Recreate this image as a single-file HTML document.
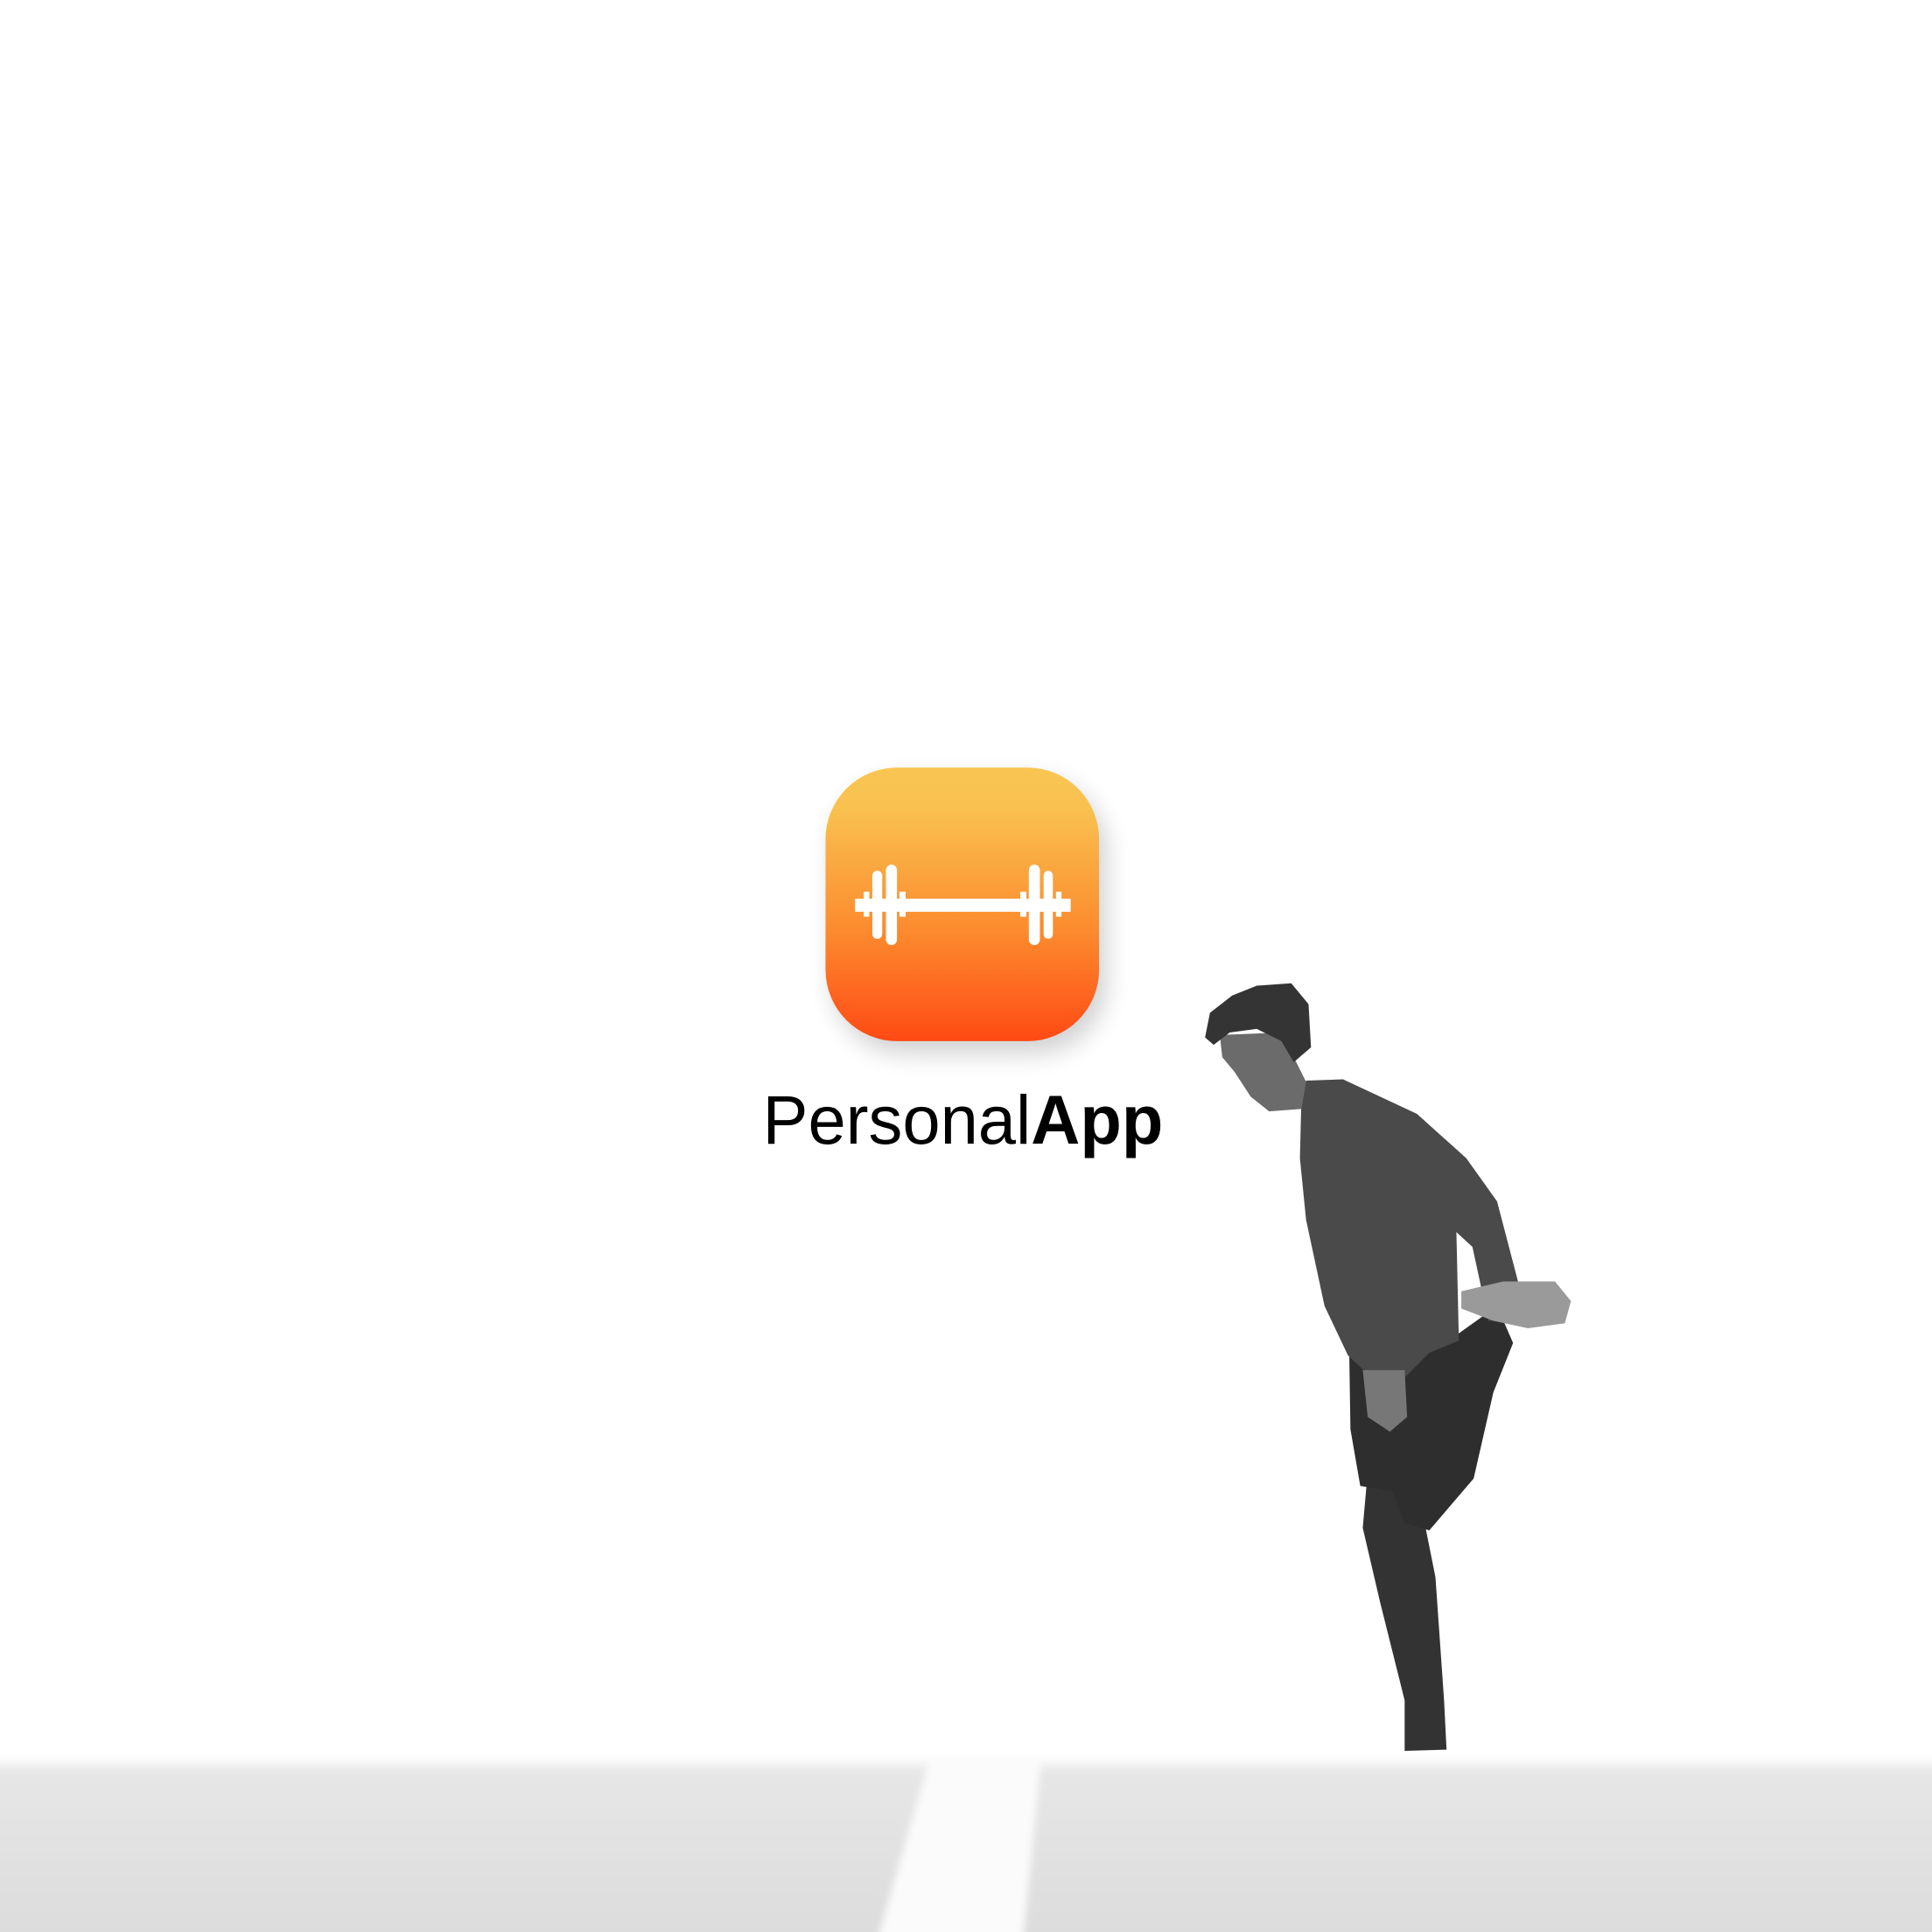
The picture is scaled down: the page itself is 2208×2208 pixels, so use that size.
<!DOCTYPE html>
<html><head><meta charset="utf-8"><style>
html,body{margin:0;padding:0;background:#fff;}
svg{display:block;}
</style></head><body>
<svg width="2208" height="2208" viewBox="0 0 1568 1568" xmlns="http://www.w3.org/2000/svg">
<defs>
<linearGradient id="ig" x1="0" y1="0" x2="0" y2="1">
<stop offset="0" stop-color="#f9c553"/><stop offset="0.15" stop-color="#f9c150"/>
<stop offset="0.6" stop-color="#fc8a2e"/><stop offset="1" stop-color="#ff4a14"/>
</linearGradient>
<linearGradient id="gr" x1="0" y1="0" x2="0" y2="1">
<stop offset="0" stop-color="#fff"/><stop offset="0.08" stop-color="#e6e6e6"/><stop offset="1" stop-color="#dcdcdc"/>
</linearGradient>
<filter id="sh" x="-30%" y="-30%" width="160%" height="160%"><feGaussianBlur stdDeviation="10"/></filter>
<filter id="bl"><feGaussianBlur stdDeviation="3"/></filter>
</defs>
<rect width="1568" height="1568" fill="#fff"/>
<g filter="url(#bl)">
<rect x="-10" y="1426" width="1590" height="150" fill="url(#gr)"/>
<polygon points="755,1426 845,1426 830,1575 712,1575" fill="#fbfbfb"/>
</g>
<rect x="676" y="633" width="222" height="222" rx="58" fill="#000" opacity="0.18" filter="url(#sh)"/>
<rect x="670" y="623" width="222" height="222" rx="58" fill="url(#ig)"/>
<g fill="#fff">
<rect x="694" y="729.4" width="175" height="10.6"/>
<rect x="701" y="723.7" width="4.5" height="20.3"/>
<rect x="708" y="706.7" width="8" height="55.3" rx="4"/>
<rect x="719" y="701.7" width="9" height="65.3" rx="4.5"/>
<rect x="730" y="723.7" width="5" height="20.3"/>
<rect x="828" y="723.7" width="5" height="20.3"/>
<rect x="835" y="701.7" width="9" height="65.3" rx="4.5"/>
<rect x="847" y="706.7" width="7.5" height="55.3" rx="3.75"/>
<rect x="857" y="723.7" width="4.5" height="20.3"/>
</g>
<text x="619" y="928" font-family="Liberation Sans, sans-serif" font-size="56" fill="#000" textLength="325" lengthAdjust="spacingAndGlyphs">Personal<tspan font-weight="bold">App</tspan></text>
<g>
<path d="M1110,1195 L1150,1205 L1165,1280 L1172,1380 L1174,1420 L1140,1421 L1140,1380 L1120,1300 L1106,1240 Z" fill="#333"/>
<path d="M1095,1095 L1180,1085 L1215,1060 L1228,1090 L1212,1130 L1196,1200 L1160,1242 L1140,1236 L1130,1210 L1104,1206 L1096,1160 Z" fill="#2e2e2e"/>
<path d="M1056,900 L1060,877 L1090,876 L1150,904 L1190,940 L1215,975 L1232,1040 L1226,1072 L1208,1072 L1195,1012 L1182,1000 L1184,1088 L1160,1098 L1140,1118 L1110,1115 L1094,1100 L1075,1060 L1060,990 L1055,940 Z" fill="#4a4a4a"/>
<path d="M1106,1112 L1140,1112 L1142,1150 L1128,1162 L1110,1150 Z" fill="#777"/>
<path d="M990,840 L1040,838 L1060,878 L1056,900 L1030,902 L1015,890 L1002,870 L992,858 Z" fill="#6b6b6b"/>
<path d="M978,842 L982,822 L1000,808 L1020,800 L1048,798 L1062,815 L1064,850 L1050,862 L1040,845 L1020,835 L998,838 L985,848 Z" fill="#343434"/>
<path d="M1186,1048 L1220,1040 L1262,1040 L1275,1056 L1270,1074 L1240,1078 L1212,1072 L1186,1062 Z" fill="#9a9a9a"/>
</g>
</svg>
</body></html>
